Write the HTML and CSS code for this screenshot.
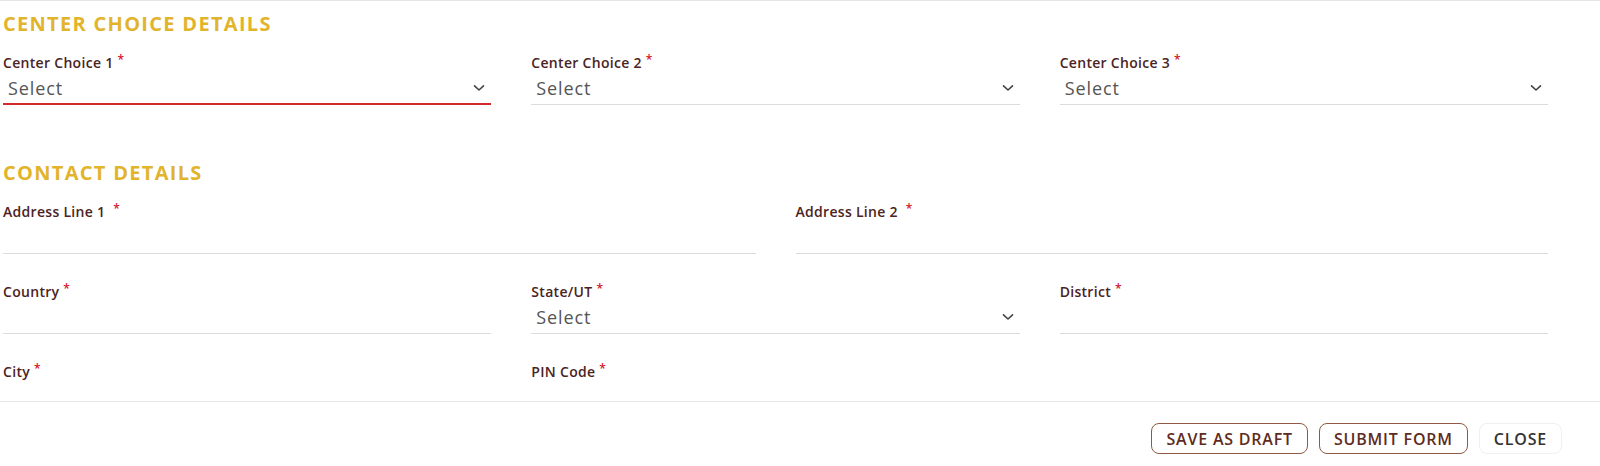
FILE: index.html
```html
<!DOCTYPE html>
<html>
<head>
<meta charset="utf-8">
<link rel="stylesheet" href="styles.css">
</head>
<body>
<div class="form-body">
  <h2 class="section-title">CENTER CHOICE DETAILS</h2>
  <div class="row cols-3">
    <div class="field">
      <label class="label">Center Choice 1 <span class="req">*</span></label>
      <div class="input select focused"><span class="value">Select</span><svg class="chev" viewBox="0 0 12 8"><path d="M1.5 1.8 L6 6 L10.5 1.8"/></svg></div>
    </div>
    <div class="field">
      <label class="label">Center Choice 2 <span class="req">*</span></label>
      <div class="input select"><span class="value">Select</span><svg class="chev" viewBox="0 0 12 8"><path d="M1.5 1.8 L6 6 L10.5 1.8"/></svg></div>
    </div>
    <div class="field">
      <label class="label">Center Choice 3 <span class="req">*</span></label>
      <div class="input select"><span class="value">Select</span><svg class="chev" viewBox="0 0 12 8"><path d="M1.5 1.8 L6 6 L10.5 1.8"/></svg></div>
    </div>
  </div>

  <h2 class="section-title second">CONTACT DETAILS</h2>
  <div class="row cols-2">
    <div class="field">
      <label class="label">Address Line 1 &nbsp;<span class="req">*</span></label>
      <div class="input"></div>
    </div>
    <div class="field">
      <label class="label">Address Line 2 &nbsp;<span class="req">*</span></label>
      <div class="input"></div>
    </div>
  </div>
  <div class="row cols-3 gap-row">
    <div class="field">
      <label class="label">Country <span class="req">*</span></label>
      <div class="input"></div>
    </div>
    <div class="field">
      <label class="label">State/UT <span class="req">*</span></label>
      <div class="input select"><span class="value">Select</span><svg class="chev" viewBox="0 0 12 8"><path d="M1.5 1.8 L6 6 L10.5 1.8"/></svg></div>
    </div>
    <div class="field">
      <label class="label">District <span class="req">*</span></label>
      <div class="input"></div>
    </div>
  </div>
  <div class="row cols-3 gap-row">
    <div class="field">
      <label class="label">City <span class="req">*</span></label>
      <div class="input"></div>
    </div>
    <div class="field">
      <label class="label">PIN Code <span class="req">*</span></label>
      <div class="input"></div>
    </div>
    <div class="field"></div>
  </div>
</div>
<div class="footer">
  <button class="btn outline">SAVE AS DRAFT</button>
  <button class="btn outline">SUBMIT FORM</button>
  <button class="btn plain">CLOSE</button>
</div>
</body>
</html>
```
FILE: styles.css
```css
* { box-sizing: border-box; }
html, body { margin: 0; padding: 0; background: #ffffff; }
body {
  font-family: "Open Sans", "DejaVu Sans", sans-serif;
  width: 1600px;
  height: 466px;
  overflow: hidden;
}
.form-body {
  border-top: 1px solid #e6e6e6;
  height: 401px;
  overflow: hidden;
  padding: 11px 52px 0 3px;
}
.section-title {
  margin: 0;
  font-size: 20px;
  line-height: 24px;
  font-weight: 700;
  color: #e2b42c;
  letter-spacing: 1.3px;
}
.section-title.second { margin-top: 56px; }
.row {
  display: grid;
  column-gap: 40px;
}
.cols-3 { grid-template-columns: 1fr 1fr 1fr; }
.cols-2 { grid-template-columns: 1fr 1fr; }
.section-title + .row { margin-top: 17px; }
.gap-row { margin-top: 28px; }
.field { display: flex; flex-direction: column; }
.label {
  height: 20px;
  line-height: 20px;
  font-size: 14px;
  font-weight: 600;
  color: #4b2323;
  letter-spacing: 0.3px;
}
.req {
  color: #d3142a;
  font-size: 12px;
  position: relative;
  top: -4px;
}
.input {
  height: 32px;
  border-bottom: 1px solid #dcdcdc;
  display: flex;
  align-items: center;
  justify-content: space-between;
  padding: 0 6px 0 5px;
}
.input.focused { border-bottom: 2px solid #d32a2a; }
.value {
  font-size: 18px;
  color: #545454;
  line-height: 24px;
  margin-top: -1px;
  letter-spacing: 0.9px;
}
.chev {
  width: 12px;
  height: 8px;
  margin-top: -1px;
}
.chev path {
  fill: none;
  stroke: #444;
  stroke-width: 1.6;
  stroke-linecap: round;
  stroke-linejoin: round;
}
.footer {
  border-top: 1px solid #e8e8e8;
  display: flex;
  justify-content: flex-end;
  gap: 11px;
  padding: 21px 38px 0 0;
}
.btn {
  height: 31px;
  font-family: "Open Sans", "DejaVu Sans", sans-serif;
  font-size: 16px;
  font-weight: 600;
  background: #fff;
  border-radius: 8px;
  padding: 0 14px;
  cursor: pointer;
  letter-spacing: 0.8px;
}
.btn.outline { border: 1px solid #8f5a45; color: #5e2b21; }
.btn.plain { border: 1px solid #f0f0f0; color: #333; }
```
